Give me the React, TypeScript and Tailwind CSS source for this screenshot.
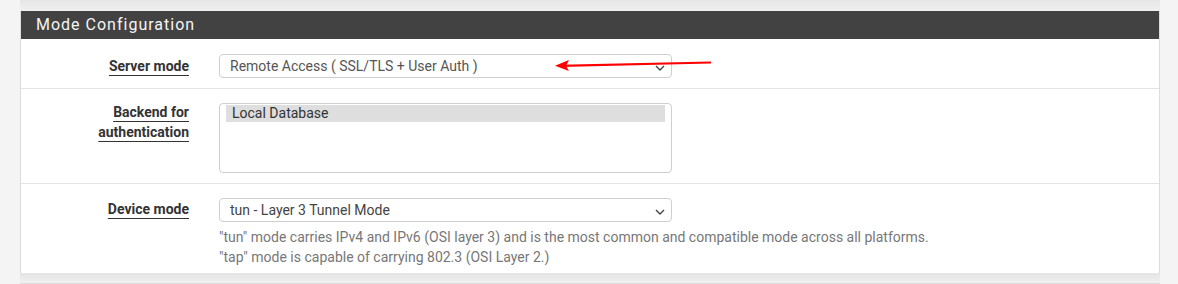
function Chevron() {
  return (
    <svg width="10" height="6" viewBox="0 0 10 6" className="absolute right-[6px] top-[10px]">
      <path d="M1 1l4 4 4-4" fill="none" stroke="#444" strokeWidth="1.4" />
    </svg>
  );
}

function Label({ children }: { children: React.ReactNode }) {
  return (
    <div className="w-[183px] shrink-0 pr-[15px] text-right text-[14px] leading-[20px] font-bold text-[#333]">
      <span className="underline decoration-1 underline-offset-[4px]">{children}</span>
    </div>
  );
}

export default function App() {
  return (
    <div className="relative h-[284px] w-[1178px] overflow-hidden bg-[#f4f4f4] pl-[20px] pr-[18px] font-['Roboto',sans-serif]">
      {/* previous panel bottom */}
      <div className="h-[11px] bg-gradient-to-b from-[#e6e6e6] to-[#f0f0f0]" />

      <div className="border-x border-[#dcdcdc] bg-white">
        <div className="flex h-[28px] items-center bg-[#424242] px-[15px] text-[16px] tracking-[1px] text-[#f5f5f5]">
          Mode Configuration
        </div>

        {/* Server mode */}
        <div className="flex border-b border-[#e3e3e3] pt-[15px] pb-[10px]">
          <div className="pt-[2px]">
            <Label>Server mode</Label>
          </div>
          <div className="pl-[15px]">
            <div className="relative h-[24px] w-[453px] rounded-[4px] border border-[#cfcfcf] pl-[10px] text-[14px] leading-[22px] text-[#555]">
              Remote Access ( SSL/TLS + User Auth )
              <Chevron />
            </div>
          </div>
        </div>

        {/* Backend */}
        <div className="flex border-b border-[#e3e3e3] pt-[13px] pb-[10px]">
          <Label>
            Backend for
            <br />
            authentication
          </Label>
          <div className="pl-[15px] pt-[1px]">
            <div className="h-[70px] w-[453px] rounded-[4px] border border-[#cfcfcf] px-[6px] pt-[1px]">
              <div className="h-[17px] bg-[#dedede] pl-[6px] text-[14px] leading-[17px] text-[#333]">Local Database</div>
            </div>
          </div>
        </div>

        {/* Device mode */}
        <div className="flex pt-[14px] pb-[6px]">
          <div className="pt-[1px]">
            <Label>Device mode</Label>
          </div>
          <div className="pl-[15px]">
            <div className="relative h-[24px] w-[453px] rounded-[4px] border border-[#cfcfcf] pl-[10px] text-[14px] leading-[22px] text-[#444]">
              tun - Layer 3 Tunnel Mode
              <Chevron />
            </div>
            <div className="mt-[5px] text-[14px] leading-[20px] text-[#777]">
              "tun" mode carries IPv4 and IPv6 (OSI layer 3) and is the most common and compatible mode across all platforms.
              <br />
              "tap" mode is capable of carrying 802.3 (OSI Layer 2.)
            </div>
          </div>
        </div>
      </div>

      {/* gap to next panel */}
      <div className="h-[11px] border-b border-[#dcdcdc] bg-gradient-to-b from-[#e4e4e4] to-[#f0f0f0]" />

      {/* annotation arrow */}
      <svg className="absolute left-0 top-0" width="1178" height="284">
        <line x1="711" y1="62.5" x2="560" y2="65.8" stroke="#f00" strokeWidth="2.2" />
        <path d="M555 65.8 L569 60 L566 66 L569 71 Z" fill="#f00" />
      </svg>
    </div>
  );
}
